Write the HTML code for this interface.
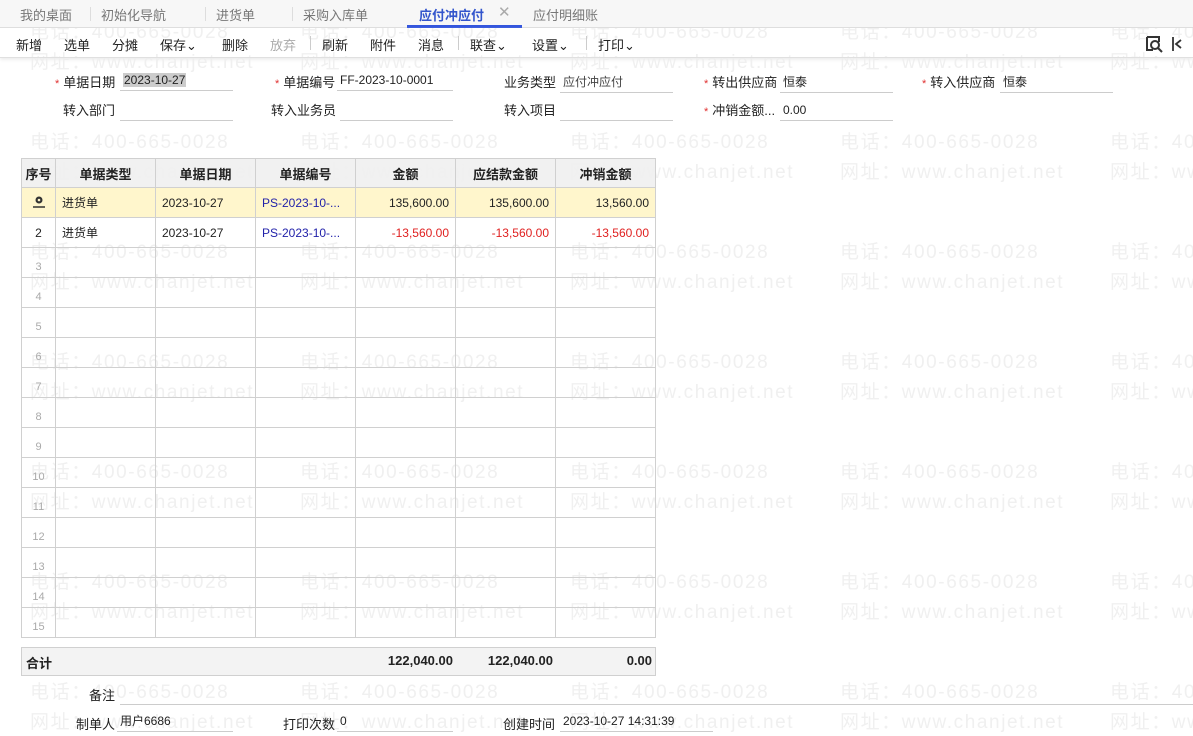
<!DOCTYPE html>
<html><head><meta charset="utf-8"><style>
*{margin:0;padding:0;box-sizing:border-box}
html,body{width:1193px;height:736px;overflow:hidden}
body{background:#fff;font-family:"Liberation Sans","Noto Sans CJK SC",sans-serif;font-size:13px;color:#222;position:relative}
.a{position:absolute;white-space:nowrap}
#w{position:absolute;left:0;top:0;width:1193px;height:736px;overflow:hidden;z-index:0}
.wm{position:absolute;color:#f0f0f0;font-size:19px;white-space:nowrap;letter-spacing:1.6px}
.tabs{position:absolute;left:0;top:0;width:1193px;height:28px;background:#f7f7f7;border-bottom:1px solid #ddd;z-index:2}
.tab{position:absolute;top:5px;font-size:13px;color:#777}
.tb{position:absolute;left:0;top:28px;width:1193px;height:30px;border-bottom:1px solid #e0e0e0;box-shadow:0 2px 3px #eee;z-index:2}
.tb span{position:absolute;top:7px;font-size:13px;color:#222}
.lbl{position:absolute;font-size:13px;color:#222;z-index:2}
.star{color:#e03030;font-size:11px;margin-right:4px}
.inp{position:absolute;height:20px;border-bottom:1px solid #ccc;font-size:12px;padding-left:3px;line-height:18px;z-index:2}
table{position:absolute;left:21px;top:158px;border-collapse:collapse;z-index:1}
td{border:1px solid #d0d0d0;height:30px;font-size:12px;padding:0 6px;white-space:nowrap}
th{border:1px solid #d0d0d0;height:29px;background:rgba(240,240,240,0.9);font-size:13px;font-weight:bold}
.n{text-align:right}.r{color:#e02020}.l{color:#2222aa}
.idx{text-align:center;font-size:11px;color:#aaa;vertical-align:bottom;padding:0 0 4px 0}
tr.sel td{background:#fff6cc}
</style></head><body>
<div id="w"></div>
<div class="tabs">
<span class="tab" style="left:20px">我的桌面</span>
<span style="position:absolute;left:90px;top:7px;width:1px;height:14px;background:#ddd"></span>
<span class="tab" style="left:101px">初始化导航</span>
<span style="position:absolute;left:205px;top:7px;width:1px;height:14px;background:#ddd"></span>
<span class="tab" style="left:216px">进货单</span>
<span style="position:absolute;left:292px;top:7px;width:1px;height:14px;background:#ddd"></span>
<span class="tab" style="left:303px">采购入库单</span>
<span class="tab" style="left:419px;color:#3355cc;font-weight:bold">应付冲应付</span>
<span class="tab" style="left:498px;color:#aaa;font-size:15px;top:3px">✕</span>
<span style="position:absolute;left:407px;top:25px;width:115px;height:3px;background:#3355dd"></span>
<span class="tab" style="left:533px">应付明细账</span>
</div>
<div class="tb">
<span style="left:16px">新增</span><span style="left:64px">选单</span><span style="left:112px">分摊</span>
<span style="left:160px">保存⌄</span><span style="left:222px">删除</span><span style="left:270px;color:#aaa">放弃</span>
<span style="left:310px;top:8px;width:1px;height:14px;background:#ccc"></span>
<span style="left:322px">刷新</span><span style="left:370px">附件</span><span style="left:418px">消息</span>
<span style="left:458px;top:8px;width:1px;height:14px;background:#ccc"></span>
<span style="left:470px">联查⌄</span><span style="left:532px">设置⌄</span>
<span style="left:586px;top:8px;width:1px;height:14px;background:#ccc"></span>
<span style="left:598px">打印⌄</span>
<svg style="position:absolute;left:1145px;top:7px" width="18" height="18" viewBox="0 0 18 18"><path d="M2 2h12v5M2 2v13h6" fill="none" stroke="#333" stroke-width="2"/><circle cx="10" cy="10" r="4" fill="none" stroke="#333" stroke-width="2"/><path d="M13 13l4 4" stroke="#333" stroke-width="2"/></svg>
<svg style="position:absolute;left:1171px;top:8px" width="12" height="16" viewBox="0 0 12 16"><path d="M2 1v14M10 4l-5 4 5 4" fill="none" stroke="#333" stroke-width="1.8"/></svg>
</div>
<div class="lbl" style="left:55px;top:72px"><span class="star">*</span>单据日期</div>
<div class="inp" style="left:120px;top:71px;width:113px"><span style="background:#ccc;padding:0 1px">2023-10-27</span></div>
<div class="lbl" style="left:275px;top:72px"><span class="star">*</span>单据编号</div>
<div class="inp" style="left:337px;top:71px;width:116px">FF-2023-10-0001</div>
<div class="lbl" style="left:504px;top:72px">业务类型</div>
<div class="inp" style="left:560px;top:73px;width:113px;color:#444">应付冲应付</div>
<div class="lbl" style="left:704px;top:72px"><span class="star">*</span>转出供应商</div>
<div class="inp" style="left:780px;top:73px;width:113px">恒泰</div>
<div class="lbl" style="left:922px;top:72px"><span class="star">*</span>转入供应商</div>
<div class="inp" style="left:1000px;top:73px;width:113px">恒泰</div>
<div class="lbl" style="left:63px;top:100px">转入部门</div>
<div class="inp" style="left:120px;top:101px;width:113px"></div>
<div class="lbl" style="left:271px;top:100px">转入业务员</div>
<div class="inp" style="left:340px;top:101px;width:113px"></div>
<div class="lbl" style="left:504px;top:100px">转入项目</div>
<div class="inp" style="left:560px;top:101px;width:113px"></div>
<div class="lbl" style="left:704px;top:100px"><span class="star">*</span>冲销金额...</div>
<div class="inp" style="left:780px;top:101px;width:113px">0.00</div>
<table>
<tr><th style="width:34px">序号</th><th style="width:100px">单据类型</th><th style="width:100px">单据日期</th><th style="width:100px">单据编号</th><th style="width:100px">金额</th><th style="width:100px">应结款金额</th><th style="width:100px">冲销金额</th></tr>
<tr class="sel"><td style="text-align:center;padding:0"><svg width="12" height="13" viewBox="0 0 12 13"><circle cx="6" cy="5" r="3.5" fill="#333"/><circle cx="6" cy="5" r="1.3" fill="#fff6cc"/><path d="M0 12h12" stroke="#333" stroke-width="1.5"/></svg></td><td>进货单</td><td>2023-10-27</td><td class="l">PS-2023-10-...</td><td class="n">135,600.00</td><td class="n">135,600.00</td><td class="n">13,560.00</td></tr>
<tr><td style="text-align:center">2</td><td>进货单</td><td>2023-10-27</td><td class="l">PS-2023-10-...</td><td class="n r">-13,560.00</td><td class="n r">-13,560.00</td><td class="n r">-13,560.00</td></tr>
<tr><td class="idx">3</td><td></td><td></td><td></td><td></td><td></td><td></td></tr>
<tr><td class="idx">4</td><td></td><td></td><td></td><td></td><td></td><td></td></tr>
<tr><td class="idx">5</td><td></td><td></td><td></td><td></td><td></td><td></td></tr>
<tr><td class="idx">6</td><td></td><td></td><td></td><td></td><td></td><td></td></tr>
<tr><td class="idx">7</td><td></td><td></td><td></td><td></td><td></td><td></td></tr>
<tr><td class="idx">8</td><td></td><td></td><td></td><td></td><td></td><td></td></tr>
<tr><td class="idx">9</td><td></td><td></td><td></td><td></td><td></td><td></td></tr>
<tr><td class="idx">10</td><td></td><td></td><td></td><td></td><td></td><td></td></tr>
<tr><td class="idx">11</td><td></td><td></td><td></td><td></td><td></td><td></td></tr>
<tr><td class="idx">12</td><td></td><td></td><td></td><td></td><td></td><td></td></tr>
<tr><td class="idx">13</td><td></td><td></td><td></td><td></td><td></td><td></td></tr>
<tr><td class="idx">14</td><td></td><td></td><td></td><td></td><td></td><td></td></tr>
<tr><td class="idx">15</td><td></td><td></td><td></td><td></td><td></td><td></td></tr>
</table>
<div style="position:absolute;left:21px;top:647px;width:635px;height:29px;background:#f3f3f3;border:1px solid #d0d0d0;font-weight:bold;font-size:13px;z-index:1">
<span class="a" style="left:4px;top:5px">合计</span>
<span class="a" style="right:202px;top:5px">122,040.00</span>
<span class="a" style="right:102px;top:5px">122,040.00</span>
<span class="a" style="right:3px;top:5px">0.00</span>
</div>
<div class="lbl" style="left:89px;top:685px">备注</div>
<div style="position:absolute;left:120px;top:704px;width:1073px;border-bottom:1px solid #ccc;z-index:2"></div>
<div class="lbl" style="left:76px;top:714px">制单人</div>
<div class="inp" style="left:117px;top:712px;width:116px">用户6686</div>
<div class="lbl" style="left:283px;top:714px">打印次数</div>
<div class="inp" style="left:337px;top:712px;width:116px">0</div>
<div class="lbl" style="left:503px;top:714px">创建时间</div>
<div class="inp" style="left:560px;top:712px;width:153px">2023-10-27 14:31:39</div>
<script>
var h='';var xs=[30,300,570,840,1110];
for(var y=30;y<736;y+=110){for(var i=0;i<xs.length;i++){h+='<div class="wm" style="left:'+xs[i]+'px;top:'+(y-13)+'px">电话：400-665-0028</div><div class="wm" style="left:'+xs[i]+'px;top:'+(y+17)+'px">网址：www.chanjet.net</div>';}}
document.getElementById('w').innerHTML=h;
</script>
</body></html>
